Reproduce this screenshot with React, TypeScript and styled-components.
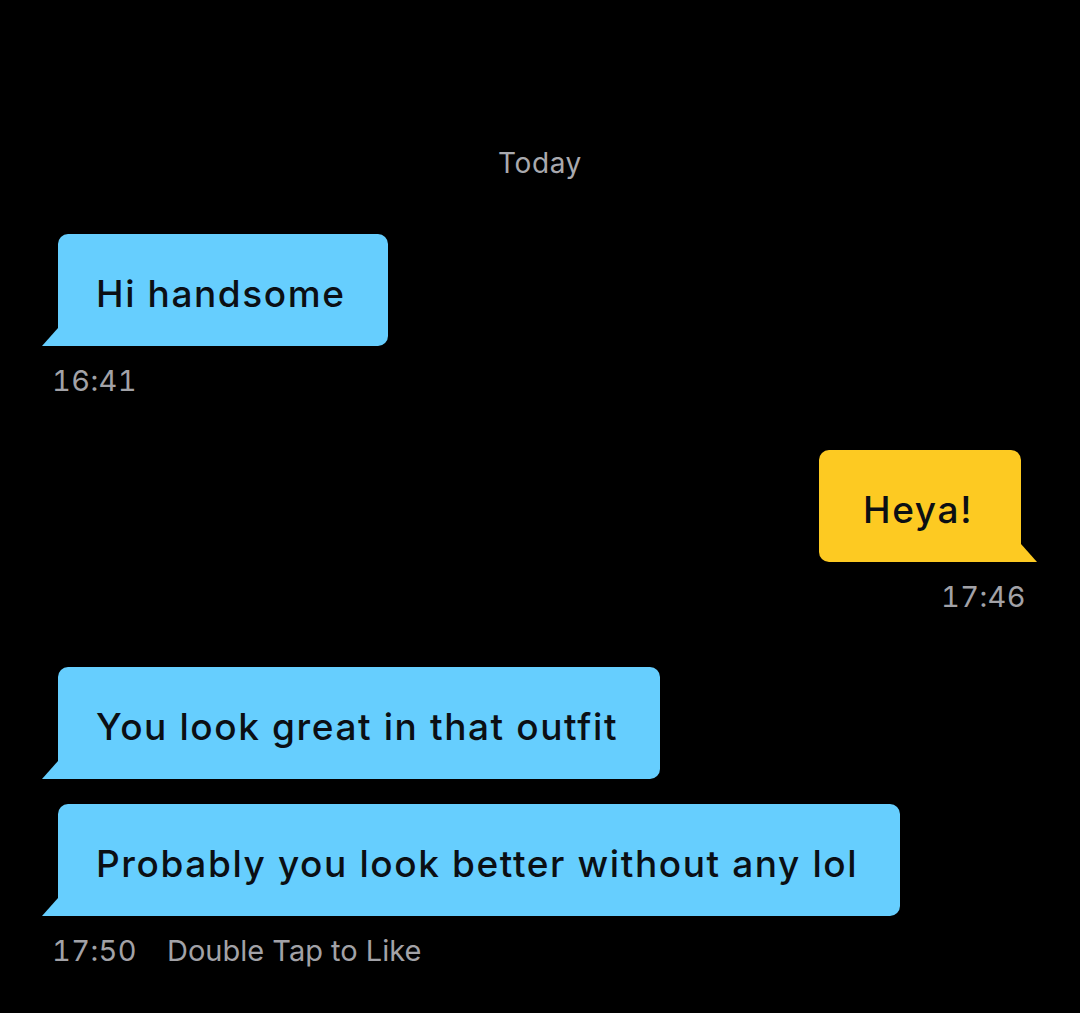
import React from 'react'
import styled, { createGlobalStyle } from 'styled-components'

const GlobalStyle = createGlobalStyle`
  html, body {
    margin: 0;
    padding: 0;
    background: #000;
  }
  body {
    font-family: Inter, "Noto Sans", "Liberation Sans", sans-serif;
  }
`

const Screen = styled.div`
  width: 1080px;
  height: 1013px;
  background: #000;
  display: flex;
  flex-direction: column;
  padding-top: 145px;
  box-sizing: border-box;
  overflow: hidden;
`

const DayLabel = styled.div`
  text-align: center;
  font-size: 28px;
  line-height: 36px;
  letter-spacing: 0.6px;
  color: #a9a9ae;
  margin-bottom: 53px;
`

const Row = styled.div<{ $mine?: boolean; $gap?: number }>`
  display: flex;
  justify-content: ${(p) => (p.$mine ? 'flex-end' : 'flex-start')};
  padding: ${(p) => (p.$mine ? '0 59px 0 0' : '0 0 0 58px')};
  margin-top: ${(p) => p.$gap ?? 0}px;
`

const Bubble = styled.div<{ $mine?: boolean }>`
  position: relative;
  height: 112px;
  box-sizing: border-box;
  display: flex;
  align-items: center;
  padding: ${(p) => (p.$mine ? '6px 48px 0 44px' : '6px 42px 0 38px')};
  background: ${(p) => (p.$mine ? '#fdca22' : '#66cefe')};
  color: #0b0f14;
  font-size: 37px;
  font-weight: 500;
  letter-spacing: 1.6px;
  border-radius: ${(p) => (p.$mine ? '10px 10px 0 10px' : '10px 10px 10px 0')};
  white-space: nowrap;

  &::after {
    content: '';
    position: absolute;
    bottom: 0;
    width: 16px;
    height: 18px;
    background: inherit;
    ${(p) =>
      p.$mine
        ? 'right: -16px; clip-path: polygon(0 0, 100% 100%, 0 100%);'
        : 'left: -16px; clip-path: polygon(100% 0, 100% 100%, 0 100%);'}
  }
`

const Meta = styled.div<{ $mine?: boolean }>`
  display: flex;
  gap: 30px;
  justify-content: ${(p) => (p.$mine ? 'flex-end' : 'flex-start')};
  padding: ${(p) => (p.$mine ? '0 54px 0 0' : '0 0 0 52px')};
  margin-top: 17px;
  font-size: 29px;
  line-height: 36px;
  color: #a2a2a7;
`

const Time = styled.span`
  font-variant-numeric: tabular-nums;
  letter-spacing: 0.4px;
`

type Msg = { text: string; mine?: boolean }

const ChatBubble = ({ text, mine, gap }: Msg & { gap?: number }) => (
  <Row $mine={mine} $gap={gap}>
    <Bubble $mine={mine}>{text}</Bubble>
  </Row>
)

export default function App() {
  return (
    <Screen>
      <GlobalStyle />
      <DayLabel>Today</DayLabel>

      <ChatBubble text="Hi handsome" />
      <Meta>
        <Time>16:41</Time>
      </Meta>

      <ChatBubble text="Heya!" mine gap={51} />
      <Meta $mine>
        <Time>17:46</Time>
      </Meta>

      <ChatBubble text="You look great in that outfit" gap={52} />
      <ChatBubble text="Probably you look better without any lol" gap={25} />
      <Meta>
        <Time>17:50</Time>
        <span>Double Tap to Like</span>
      </Meta>
    </Screen>
  )
}
